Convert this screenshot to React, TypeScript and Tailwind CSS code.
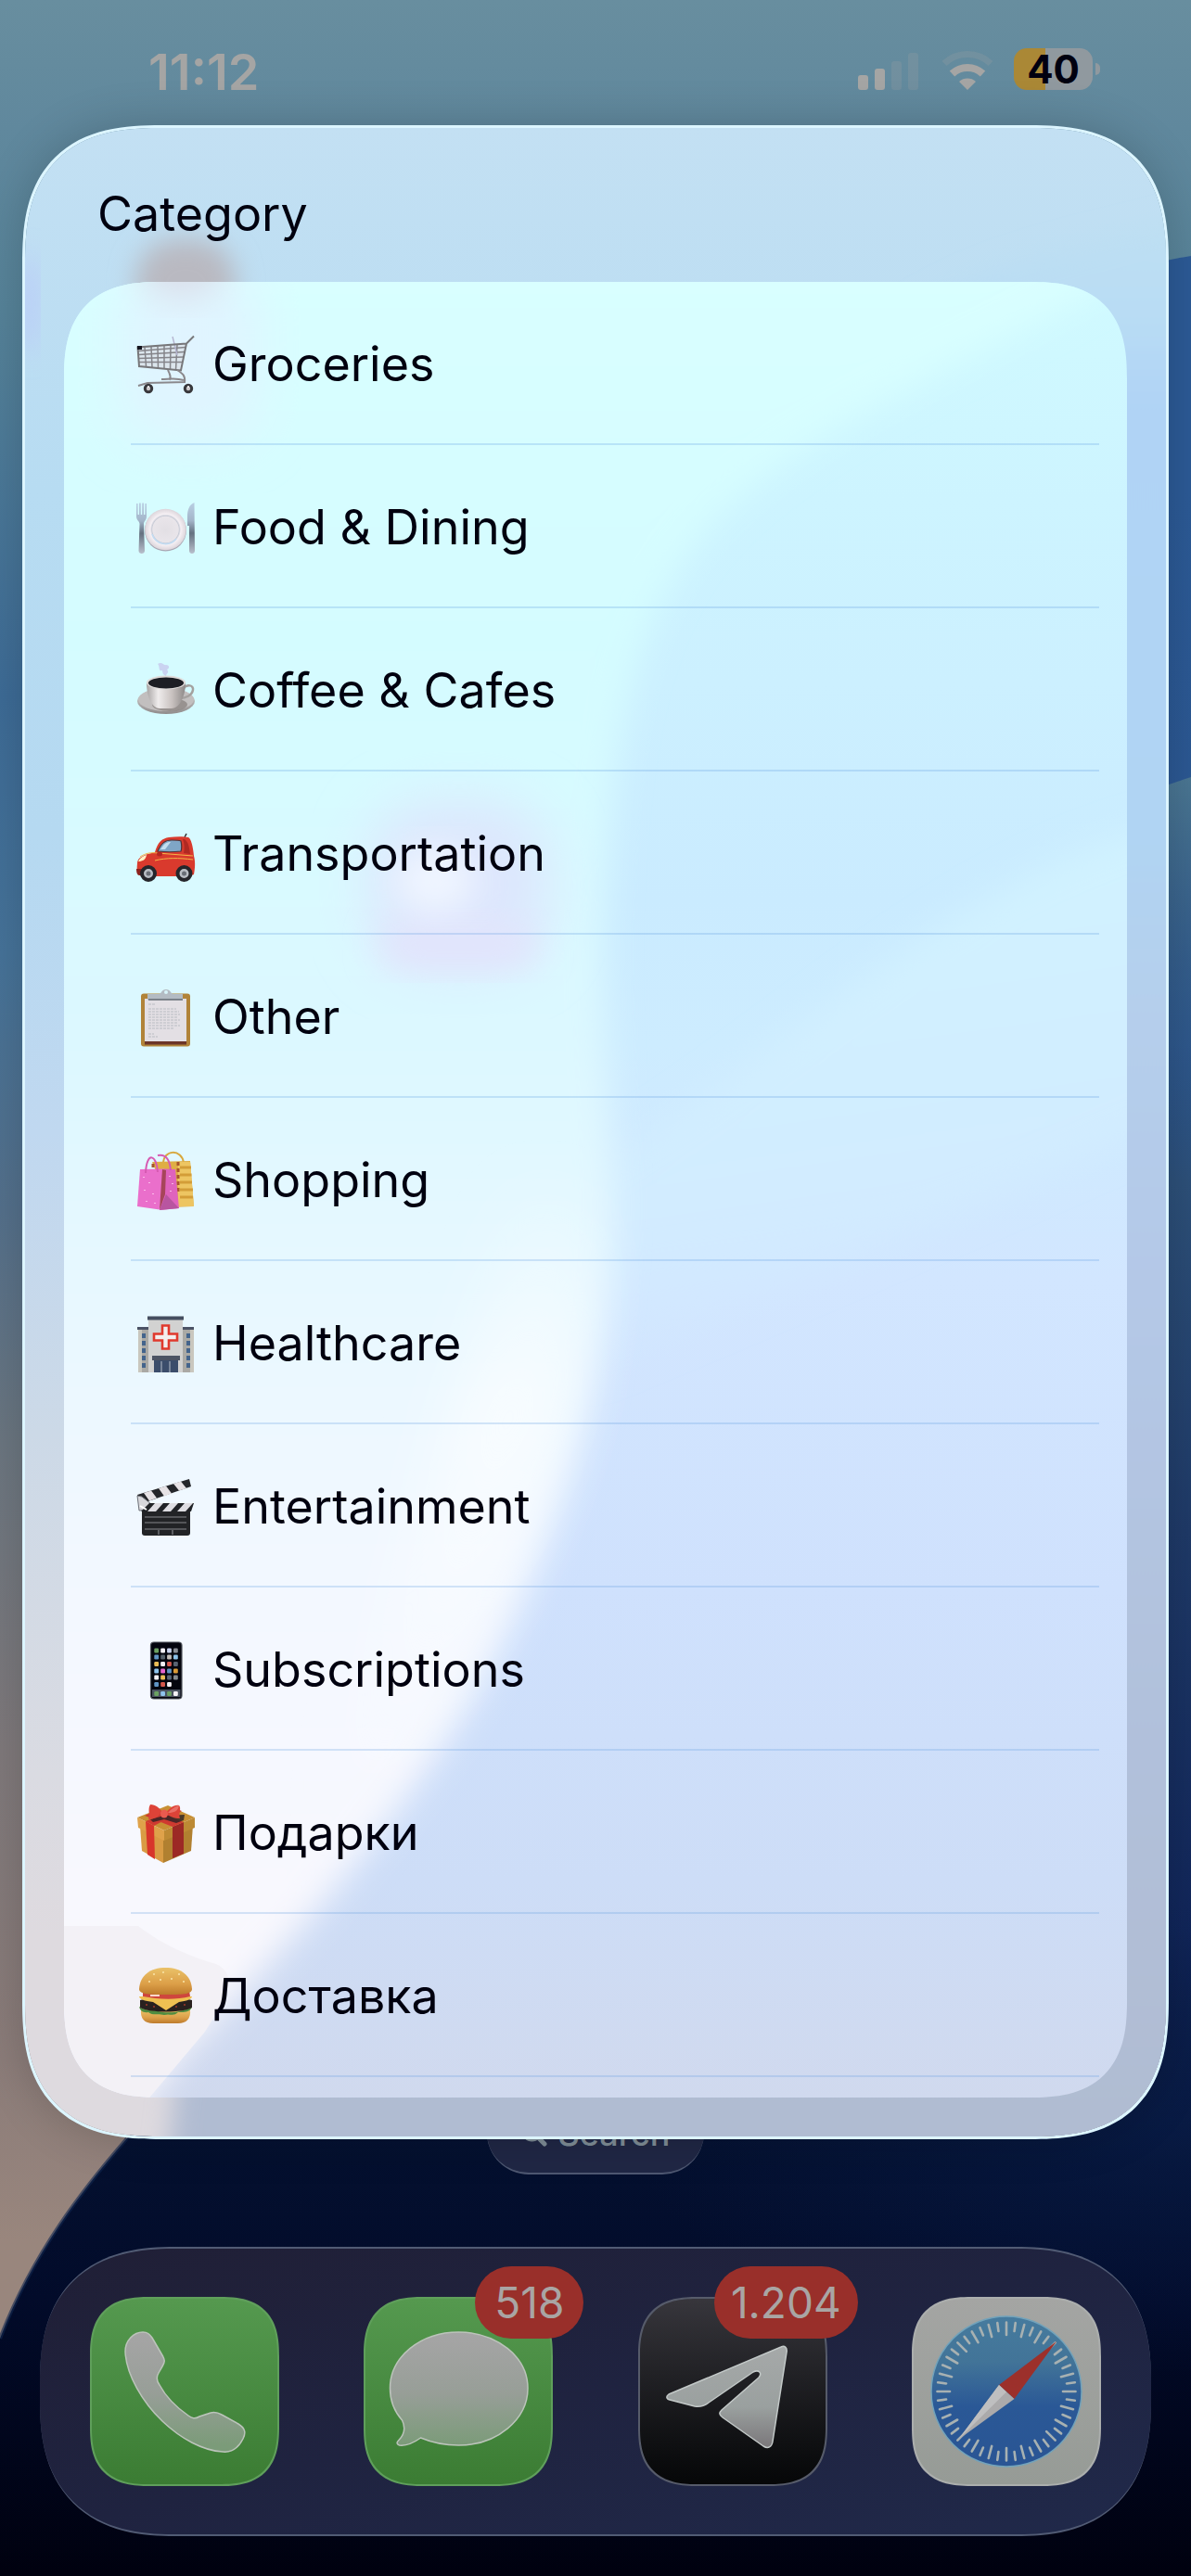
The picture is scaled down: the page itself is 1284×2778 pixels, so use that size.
import type { ReactNode } from "react";

const svg64 = "h-16 w-16 shrink-0 overflow-visible";

function Cart() {
  return (
    <svg viewBox="0 0 64 64" className={svg64} fill="none" aria-hidden="true">
      <path d="M54 9.500 48 38.500 3 34 1.500 13.500z" fill="#d8dbe0" opacity=".6" />
      <g stroke="#85858a" strokeWidth="1.500">
        <path d="M2 17.500 53 13.500M2.400 21.500 52 18.500M2.600 25.500 51 24M2.800 29.500 49.500 29.500" />
        <path d="M9 13.500 10.500 34M16 13 17 35M23 12.500 23.500 36M30 12 30 36.500M37 11.500 36.500 37M44 11 42.500 38" />
      </g>
      <path d="M39 2 44 22" stroke="#b4b4d0" strokeWidth="1.400" />
      <path d="M62 1.500 54 9.500 48 38.500 3 34 1.500 13.500 54 9.500" stroke="#77777a" strokeWidth="2" />
      <path d="M34 38c2 5 4 6 2 11M44 38c6 4 9 6 8 13M27 48c8 0 15-2 24 1M2 55l10-3 41-1" stroke="#8a888c" strokeWidth="2" />
      <rect x="1" y="12" width="5" height="4" fill="#15151f" />
      <g fill="#c9c6c8" stroke="#38383c" strokeWidth="3">
        <circle cx="13" cy="58" r="3.700" />
        <circle cx="56" cy="58" r="3.700" />
      </g>
      <path d="M12 56h2M55 56h2" stroke="#fff" strokeWidth="1.500" />
    </svg>
  );
}

function Plate() {
  return (
    <svg viewBox="0 0 64 64" className={svg64} aria-hidden="true">
      <defs>
        <linearGradient id="steel" x1="0" y1="0" x2="0" y2="1">
          <stop offset="0" stopColor="#b9cfe3" />
          <stop offset=".35" stopColor="#a3b5c9" />
          <stop offset=".6" stopColor="#647180" />
          <stop offset="1" stopColor="#b8bfcc" />
        </linearGradient>
        <radialGradient id="plate">
          <stop offset="0" stopColor="#e2dfe4" />
          <stop offset=".62" stopColor="#e9e5ea" />
          <stop offset=".66" stopColor="#c8cbd6" />
          <stop offset=".74" stopColor="#f5f0f4" />
          <stop offset="1" stopColor="#dcd5db" />
        </radialGradient>
      </defs>
      <circle cx="31.500" cy="35" r="22.500" fill="#a9a7b4" />
      <circle cx="31.500" cy="34" r="22.300" fill="url(#plate)" />
      <path d="M17 39a15 15 0 0 0 26 5" fill="none" stroke="#c2dcf2" strokeWidth="1.600" />
      <path d="M0 6h1.600v12h1.400V5.500h1.800V18h1.400V5.500h1.800V18h1.400V6H11v14c0 4-3 5-3 8l1 29c0 4-6.500 4-6.500 0l1-29c0-3-3.500-4-3.500-8z" fill="url(#steel)" />
      <path d="M62.500 5C57 7 55 13 55 20v10h2v27c0 4 6 4 6 0z" fill="url(#steel)" />
    </svg>
  );
}

function Coffee() {
  return (
    <svg viewBox="0 0 64 64" className={svg64} aria-hidden="true">
      <defs>
        <linearGradient id="cup" x1="0" x2="1">
          <stop offset="0" stopColor="#a8a4a4" />
          <stop offset=".3" stopColor="#efecec" />
          <stop offset=".65" stopColor="#c9c2c0" />
          <stop offset="1" stopColor="#8d8988" />
        </linearGradient>
        <linearGradient id="saucer" x1="0" y1="0" x2="0" y2="1">
          <stop offset="0" stopColor="#dad8d9" />
          <stop offset="1" stopColor="#908c8c" />
        </linearGradient>
      </defs>
      <ellipse cx="32" cy="43" rx="31" ry="14" fill="url(#saucer)" />
      <ellipse cx="32" cy="41.500" rx="30" ry="12.500" fill="#c2bfbf" />
      <ellipse cx="36" cy="47" rx="19" ry="7" fill="#7c7472" opacity=".6" />
      <path d="M50 30c5-6 12-4 11 1-1 6-8 9-14 9" fill="none" stroke="#a4a19f" strokeWidth="2.500" />
      <path d="M11 23c0 14 5 28 14 28h13c9 0 15-14 15-28z" fill="url(#cup)" />
      <ellipse cx="32" cy="23" rx="21" ry="7.500" fill="#dedbda" />
      <ellipse cx="32" cy="23.500" rx="19" ry="6" fill="#1d1e24" />
      <path d="M23 3c5-3 6 2 9 1 4 0 4 4 1 5 3 4-1 4-1 7-3-1-4-3-4-6-5 1-2-4-5-7z" fill="#c5c6ec" opacity=".75" />
    </svg>
  );
}

function Car() {
  return (
    <svg viewBox="0 0 64 64" className={svg64} aria-hidden="true">
      <path d="m52 14 2-4" stroke="#333" strokeWidth="1.500" />
      <path d="M20 30c3-11 8-15 15-16 8-1 16-1 21 0 3 1 5 10 6 20 2 7 1 15 0 20l-5 2H8c-7 0-8-5-7-14 0-6 6-9 19-12z" fill="#d93a2d" />
      <path d="M23 29c4-9 8-12 15-12 5 0 8 0 10 1 1 4 1 8 0 11-8 1-16 1-25 0z" fill="#7fa6c6" stroke="#4d3438" strokeWidth="1.200" />
      <path d="M26 27c4-6 6-8 11-8l-6 8z" fill="#c4dfef" />
      <path d="M52 16c4 3 5 8 6 16l-7-1c1-5 1-10-1-15z" fill="#8d1c19" opacity=".55" />
      <path d="M4 35c6-4 12-5 19-4l38 3M20 39c12-3 26-3 41-1" fill="none" stroke="#f2b648" strokeWidth="1" />
      <path d="M2 40c2-4 5-6 9-7-1 5-4 7-9 7z" fill="#fff1c4" />
      <ellipse cx="25" cy="32" rx="3" ry="2.500" fill="#b32620" />
      <path d="M0 48h8v7H3c-2 0-3-3-3-7z" fill="#8c211d" />
      <g fill="#b9bec4" stroke="#25262b" strokeWidth="4">
        <circle cx="13" cy="53" r="7" />
        <circle cx="51.500" cy="53" r="7" />
      </g>
      <g fill="#6a6f77">
        <circle cx="13" cy="53" r="2.500" />
        <circle cx="51.500" cy="53" r="2.500" />
      </g>
    </svg>
  );
}

function Clipboard() {
  return (
    <svg viewBox="0 0 64 64" className={svg64} aria-hidden="true">
      <rect x="5" y="6.500" width="53" height="57" rx="3" fill="#b18339" />
      <rect x="9" y="56" width="45" height="5.500" fill="#6c3528" />
      <path d="M9 12h45v46H9z" fill="#e3dfe4" />
      <path
        d="M13 18h7M13 23h30M13 26h33M13 29h34M13 32h32M13 35h34M13 38h31M13 41h34M13 44h27M13 50h6M13 53h10"
        stroke="#b9bcc2"
        strokeWidth="1"
        strokeDasharray="3 1"
      />
      <path d="M12 7h12c3 0 3-5 8-5s5 5 8 5h10v6H12z" fill="#b3bbc3" />
      <path d="M13 13h37" stroke="#626a72" strokeWidth="1.400" />
      <circle cx="32" cy="5" r="2" fill="#d8f4fa" />
    </svg>
  );
}

function Bags() {
  return (
    <svg viewBox="0 0 64 64" className={svg64} aria-hidden="true">
      <path d="M29 14c0-16 20-16 22-1" fill="none" stroke="#d8a83e" strokeWidth="2" />
      <path d="m17 12 41-1 4 49-25 1z" fill="#dfae45" />
      <path d="M45 12h13l4 48H45z" fill="#edc562" />
      <path d="M47 18h12M47 26h12.500M47 34h13M47 42h14M47 50h14" stroke="#d39d38" strokeWidth="3" />
      <path d="M45 12v34M18 14v5" stroke="#a8542c" strokeWidth="3" strokeDasharray="4 3" />
      <path d="m4 20 26-.500-5 44L1 60z" fill="#ea6fcb" />
      <path d="m30 19.500 12 .500 4 42-21 2z" fill="#df63bd" />
      <path d="m28 20 4 1-1 26-6 17z" fill="#a6455a" />
      <path d="m25 64 7-17 14 15z" fill="#b855a0" />
      <path d="M10 24C11 0 22 4 23 23M23 5c9-2 13 5 14 16" fill="none" stroke="#d65ab2" strokeWidth="2" />
      <path d="M8 28v1M14 34v1M9 42v1M18 46v1M11 54v1M20 56v1M36 27v1M39 35v1M37 43v1" stroke="#ffd5f4" strokeWidth="1.500" />
    </svg>
  );
}

function Hospital() {
  return (
    <svg viewBox="0 0 64 64" className={svg64} aria-hidden="true">
      <path d="M2 16h60v47H2z" fill="#aaa9a5" />
      <path d="M2 16h4v47H2zM58 16h4v47h-4z" fill="#c9c7be" />
      <path d="M1 14h13v3H1zM50 14h12v3H50z" fill="#4b5365" />
      <path d="M13 5h37v58H13z" fill="#d2d2d1" />
      <path d="M12 2.500h39v4H12z" fill="#454e60" />
      <g fill="#44648c">
        {[21, 29, 37, 45, 53].map((y) => (
          <path key={y} d={`M6 ${y}h4v5H6zM54 ${y}h4v5h-4z`} />
        ))}
      </g>
      <path d="M28 12.500h7v9h9v7h-9v9h-7v-9h-9v-7h9z" fill="#f3eeee" stroke="#e0392d" strokeWidth="2.600" />
      <path d="M17 45h30v5H17z" fill="#4d5463" />
      <path d="M19 50h26v13H19z" fill="#3b4d6b" />
      <path d="M27 51v12M36 51v12" stroke="#8e99ab" strokeWidth="1.500" />
    </svg>
  );
}

function Clapper() {
  return (
    <svg viewBox="0 0 64 64" className={svg64} aria-hidden="true">
      <path d="M1 19 57 2l2 8L4 29z" fill="#24262a" />
      <path d="m8 17 8-2.500 6 8-8 3zM24 12l8-2.500 6 8-8 3zM40 7l8-2.500 6 7.500-8 2.500z" fill="#e6e2e5" />
      <path d="m1 20 5 1 10 8-4 6-9 1z" fill="#d7d7db" stroke="#6d7077" strokeWidth="1" />
      <path d="M6 36h52v24c0 2-1 3-3 3H9c-2 0-3-1-3-3z" fill="#222326" />
      <path d="M14 28h48l-3 9H5z" fill="#202226" />
      <path d="m20 28 9 .1-8 8.900h-9zM36 28h9l-8 9h-9zM52 28h9l-8 9h-9z" fill="#dedde2" />
      <path d="M9 43h45M9 49h45M9 56h45M24 57v5M39 57v5" stroke="#85878b" strokeWidth="1.200" />
      <path d="m4 31 7 4" stroke="#fff" strokeWidth="2" />
    </svg>
  );
}

const phoneRows = [
  [11, "#6ba162", "#f4f1f6", "#c9d2ee", "#8b8f96"],
  [18, "#5f94c4", "#55606b", "#c3bdb8", "#8dc2ea"],
  [25.5, "#e9bc56", "#f4f1f6", "#d5574c", "#596371"],
  [33, "#8fc3ec", "#e765cc", "#5f94c4", "#d99a36"],
  [40, "#f4f1f6", "#e9bc56", "#5a6676", "#858a8e"],
  [47.5, "#5f94c4", "#d5574c", "#f4f1f6", "#05060f"],
  [57.5, "#6ba162", "#8fc3ec", "#6ba162", "#f4f1f6"],
] as const;

function Phone() {
  return (
    <svg viewBox="0 0 64 64" className={svg64} aria-hidden="true">
      <rect x="15.500" y="2" width="33.500" height="61" rx="3.500" fill="#04050e" stroke="#4c5057" strokeWidth="1.200" />
      <path d="M17 53h30.500v8H17z" fill="#4a5360" />
      {phoneRows.map(([y, ...colors]) =>
        colors.map((c, i) => (
          <rect key={`${y}-${i}`} x={19.3 + i * 6.9} y={y - 2.4} width="4.800" height="4.800" rx="1.200" fill={c} />
        )),
      )}
    </svg>
  );
}

function Gift() {
  return (
    <svg viewBox="0 0 64 64" className={svg64} aria-hidden="true">
      <path d="M4 24 29 36v28L6 51z" fill="#d99b44" />
      <path d="m29 36 32-13-2 28-30 13z" fill="#b18030" />
      <path d="m1 15 33-13 29 13-33 14z" fill="#c89034" />
      <path d="m1 15 29 14v11L2 26z" fill="#dfa24a" />
      <path d="m30 29 33-14v11L30 40z" fill="#bd8a34" />
      <path d="m10 19 9 5 1 36-8-5z" fill="#d8352b" />
      <path d="m39 25 12-5v34l-12 5z" fill="#9c2925" />
      <path d="m10 19 34-13 5 2-30 16zM20 8l31 12-12 5-30-12z" fill="#cf3a30" />
      <path d="m15 17 15-4 22-1-1 6-8 3-13-4-12 3z" fill="#2b2226" opacity=".8" />
      <path d="M15 1c6 0 10 4 13 8-4 5-9 8-15 8 2-6-1-11 2-16zM46 2c-6-1-11 4-14 8 3 4 9 6 15 6-2-5 2-11-1-14z" fill="#dd4338" />
      <path d="M34 10c3-4 8-7 12-8-1 6-5 8-12 8z" fill="#ea6f66" />
      <ellipse cx="30" cy="11" rx="4" ry="4.500" fill="#ea5a4f" />
    </svg>
  );
}

function Burger() {
  return (
    <svg viewBox="0 0 64 64" className={svg64} aria-hidden="true">
      <defs>
        <linearGradient id="bun" x1="0" y1="0" x2="0" y2="1">
          <stop offset="0" stopColor="#eac269" />
          <stop offset=".6" stopColor="#dc9f48" />
          <stop offset="1" stopColor="#bd7b2c" />
        </linearGradient>
      </defs>
      <path d="M5 46h53c1 10-4 15-13 15H18C9 61 4 56 5 46z" fill="url(#bun)" />
      <path d="M3 43c9 6 17 3 25 6 12 1 20 0 32-6-2 7-10 6-15 6-5 5-9 1-15 3-7-2-12 1-17-3-6 1-9-2-10-6z" fill="#4f8c40" />
      <path d="M4 36c18-5 37-5 56 0v8c-10 6-46 6-56 0z" fill="#29211f" />
      <path d="M10 41h2M18 43h2M42 43h2M51 41h2" stroke="#a03a2c" strokeWidth="1.500" />
      <path d="M3 32h57c0 3-6 5-14 6L32 47 18 38C9 37 3 35 3 32z" fill="#efc052" />
      <path d="M7 26h50l1 6c-16 4-35 3-51 0z" fill="#cf463d" />
      <path d="M15 31h10" stroke="#ffd7cb" strokeWidth="2" />
      <path d="M3 24C4 9 15 1 31.500 1S59 9 60 24c0 6-12 6-28 6S3 30 3 24z" fill="url(#bun)" />
      <path d="M19 7v2M29 5v2M38 12v2M46 7v2M26 13v2M51 15v2M14 15v2" stroke="#f8e3a6" strokeWidth="1.600" />
    </svg>
  );
}

const categories: { name: string; icon: ReactNode }[] = [
  { name: "Groceries", icon: <Cart /> },
  { name: "Food & Dining", icon: <Plate /> },
  { name: "Coffee & Cafes", icon: <Coffee /> },
  { name: "Transportation", icon: <Car /> },
  { name: "Other", icon: <Clipboard /> },
  { name: "Shopping", icon: <Bags /> },
  { name: "Healthcare", icon: <Hospital /> },
  { name: "Entertainment", icon: <Clapper /> },
  { name: "Subscriptions", icon: <Phone /> },
  { name: "Подарки", icon: <Gift /> },
  { name: "Доставка", icon: <Burger /> },
];

function Wallpaper() {
  return (
    <svg viewBox="0 0 1284 2778" preserveAspectRatio="none" className="absolute inset-0 h-full w-full" aria-hidden="true">
      <defs>
        <linearGradient id="wLeft" x1="0" y1="0" x2="0" y2="1">
          <stop offset="0" stopColor="#688e9f" />
          <stop offset=".05" stopColor="#60889d" />
          <stop offset=".12" stopColor="#568399" />
          <stop offset=".27" stopColor="#3d6b96" />
          <stop offset=".37" stopColor="#467399" />
          <stop offset=".47" stopColor="#54708b" />
          <stop offset=".56" stopColor="#6b7680" />
          <stop offset=".68" stopColor="#7f797b" />
          <stop offset=".8" stopColor="#8b7c79" />
          <stop offset=".87" stopColor="#99867d" />
        </linearGradient>
        <linearGradient id="wRight" x1="0" y1="0" x2="0" y2="1">
          <stop offset="0" stopColor="#2c5a96" />
          <stop offset=".1" stopColor="#2c5a96" />
          <stop offset=".34" stopColor="#2b5690" />
          <stop offset=".4" stopColor="#2d5079" />
          <stop offset=".55" stopColor="#1f3a68" />
          <stop offset=".72" stopColor="#11265a" />
          <stop offset=".82" stopColor="#04102f" />
          <stop offset=".88" stopColor="#020b2a" />
          <stop offset="1" stopColor="#00010f" />
        </linearGradient>
        <linearGradient id="wBand" x1="0" y1="0" x2="0" y2="1">
          <stop offset="0" stopColor="#4b7793" />
          <stop offset="1" stopColor="#2d5079" stopOpacity="0" />
        </linearGradient>
        <radialGradient id="wGlow">
          <stop offset="0" stopColor="#0b2355" />
          <stop offset="1" stopColor="#0b2355" stopOpacity="0" />
        </radialGradient>
      </defs>
      <rect width="1284" height="2778" fill="url(#wLeft)" />
      <path d="M1284 276C1000 320 800 600 660 1250 600 1700 300 2120 137 2306 90 2360 35 2430 0 2522V2778H1284Z" fill="url(#wRight)" />
      <path d="M1284 838C1200 866 1100 900 1000 960V1250H1284Z" fill="url(#wBand)" />
      <ellipse cx="1284" cy="2300" rx="600" ry="260" fill="url(#wGlow)" opacity=".45" />
      <path d="M137 2306C90 2360 35 2430 0 2522" fill="none" stroke="#10264f" strokeWidth="4" opacity=".6" />
    </svg>
  );
}

function SheetBackdrop() {
  return (
    <svg viewBox="0 0 1235 2172" preserveAspectRatio="none" className="absolute inset-0 h-full w-full" aria-hidden="true">
      <defs>
        <linearGradient id="sLeft" x1="0" y1="0" x2="0" y2="1">
          <stop offset="0" stopColor="#c3e0f3" />
          <stop offset=".18" stopColor="#b7dcf2" />
          <stop offset=".35" stopColor="#b5d9f1" />
          <stop offset=".5" stopColor="#c0d8f0" />
          <stop offset=".65" stopColor="#ccd9e7" />
          <stop offset=".82" stopColor="#dadbe2" />
          <stop offset=".9" stopColor="#dedadf" />
        </linearGradient>
        <linearGradient id="sRight" x1="0" y1="0" x2="0" y2="1">
          <stop offset="0" stopColor="#bfe0f2" />
          <stop offset=".06" stopColor="#b8dcf4" />
          <stop offset=".1" stopColor="#b0d3f5" />
          <stop offset=".32" stopColor="#b0d4f3" />
          <stop offset=".4" stopColor="#b5cfec" />
          <stop offset=".52" stopColor="#b4c9e8" />
          <stop offset=".75" stopColor="#b1c1dc" />
          <stop offset="1" stopColor="#b0bbd0" />
        </linearGradient>
        <filter id="sBlur" x="-30%" y="-30%" width="160%" height="160%">
          <feGaussianBlur stdDeviation="14" />
        </filter>
      </defs>
      <rect width="1235" height="2172" fill="url(#sLeft)" />
      <path d="M1300 80C1150 150 900 100 720 500L600 1900 170 2060 150 2240H1300Z" fill="url(#sRight)" filter="url(#sBlur)" />
      <rect x="120" y="120" width="108" height="110" rx="45" fill="#b9b9c1" filter="url(#sBlur)" />
      <ellipse cx="4" cy="190" rx="8" ry="55" fill="#b9c5fa" filter="url(#sBlur)" />
    </svg>
  );
}

function PanelBackdrop() {
  return (
    <svg viewBox="0 0 1146 1957" preserveAspectRatio="none" className="absolute inset-0 h-full w-full" aria-hidden="true">
      <defs>
        <linearGradient id="pLeft" x1="0" y1="0" x2="0" y2="1">
          <stop offset="0" stopColor="#daffff" />
          <stop offset=".22" stopColor="#d4fcff" />
          <stop offset=".42" stopColor="#dcf8ff" />
          <stop offset=".56" stopColor="#e8f8ff" />
          <stop offset=".68" stopColor="#f2f8ff" />
          <stop offset=".85" stopColor="#f8f8fe" />
          <stop offset="1" stopColor="#fbf8fb" />
        </linearGradient>
        <linearGradient id="pRight" x1="0" y1="0" x2="0" y2="1">
          <stop offset="0" stopColor="#d0faff" />
          <stop offset=".12" stopColor="#cdf4ff" />
          <stop offset=".22" stopColor="#ccf0ff" />
          <stop offset=".34" stopColor="#caebff" />
          <stop offset=".42" stopColor="#cdecff" />
          <stop offset=".55" stopColor="#d2e6ff" />
          <stop offset=".72" stopColor="#cfe1fd" />
          <stop offset=".88" stopColor="#cdddf7" />
          <stop offset="1" stopColor="#d0d9ee" />
        </linearGradient>
        <linearGradient id="pEdge" x1="0" y1="0" x2="0" y2="1">
          <stop offset="0" stopColor="#fff" stopOpacity="0" />
          <stop offset=".35" stopColor="#fff" stopOpacity=".6" />
          <stop offset="1" stopColor="#fff" stopOpacity="0" />
        </linearGradient>
        <linearGradient id="pBand" x1=".4" y1="0" x2=".55" y2="1">
          <stop offset="0" stopColor="#d0f4ff" />
          <stop offset=".7" stopColor="#d2ebff" />
          <stop offset="1" stopColor="#d2e6ff" stopOpacity="0" />
        </linearGradient>
        <filter id="pBlur" x="-30%" y="-30%" width="160%" height="160%">
          <feGaussianBlur stdDeviation="18" />
        </filter>
        <filter id="pSoft" x="-30%" y="-30%" width="160%" height="160%">
          <feGaussianBlur stdDeviation="30" />
        </filter>
      </defs>
      <rect width="1146" height="1957" fill="url(#pRight)" />
      <path d="M560 960C800 820 950 640 1200 580V900L560 1180Z" fill="url(#pBand)" filter="url(#pBlur)" />
      <path
        d="M-80-80H1250C1100 40 850 120 720 240 610 340 590 500 582 700 580 850 600 960 588 1080 570 1240 520 1370 465 1480 400 1610 270 1770 121 1916L40 2040H-80Z"
        fill="url(#pLeft)"
        filter="url(#pBlur)"
      />
      <path d="M490 960C540 980 570 960 572 1060 550 1320 400 1560 280 1690 360 1400 430 1200 490 960Z" fill="url(#pEdge)" filter="url(#pSoft)" />
      <path d="M-40 1772H80C110 1795 140 1806 164 1813 182 1822 180 1835 168 1860L152 1886 88 1962H-40Z" fill="#f3f1f6" />
      <rect x="328" y="560" width="196" height="180" rx="70" fill="#dde6fd" filter="url(#pSoft)" />
      <rect x="340" y="690" width="170" height="50" rx="25" fill="#e2e4fc" filter="url(#pBlur)" />
      <ellipse cx="400" cy="645" rx="44" ry="36" fill="#eff5ff" filter="url(#pBlur)" />
      <rect x="60" y="-20" width="150" height="190" rx="50" fill="#e0f4ff" filter="url(#pSoft)" />
      <rect x="84" y="-60" width="86" height="76" rx="30" fill="#dbdfeb" filter="url(#pBlur)" />
    </svg>
  );
}

function StatusBar() {
  return (
    <header className="relative flex h-[135px] shrink-0 items-start justify-between pt-12 pr-[98px] pl-40 text-[#a5a5a4]">
      <time className="text-[54px] leading-[60px] font-semibold">11:12</time>
      <div className="flex items-center pt-1">
        <svg viewBox="0 0 66 44" className="h-11 w-[66px]" fill="currentColor" role="img" aria-label="Signal">
          <rect x="0" y="28" width="11" height="16" rx="3" />
          <rect x="18" y="21" width="11" height="23" rx="3" />
          <rect x="36" y="13" width="11" height="31" rx="3" opacity=".22" />
          <rect x="54" y="4" width="11" height="40" rx="3" opacity=".22" />
        </svg>
        <svg viewBox="0 0 56 44" className="ml-6 h-11 w-14" fill="none" stroke="currentColor" role="img" aria-label="Wi-Fi">
          <path d="M3 15.500a36 36 0 0 1 50 0" strokeWidth="7" opacity=".22" />
          <path d="M11.500 26.500a24 24 0 0 1 33 0" strokeWidth="8" />
          <path d="M19 35a13.500 13.500 0 0 1 18 0l-9 9z" fill="currentColor" stroke="none" />
        </svg>
        <div className="ml-[22px] flex items-center gap-[3px]">
          <div className="flex h-[45px] w-[85px] items-center justify-center rounded-[14px] bg-linear-to-r from-[#aa8836] from-40% to-[#90999f] to-40% text-[42px] leading-none font-bold text-[#00000f]">
            40
          </div>
          <div className="h-[13px] w-[5px] rounded-r-full bg-[#90999f]" />
        </div>
      </div>
    </header>
  );
}

function CategorySheet() {
  return (
    <section
      role="dialog"
      aria-labelledby="sheet-title"
      className="relative z-10 mx-6 overflow-hidden rounded-[122px] border-[3px] border-[#dcf5ff] pb-[42px] shadow-[0_0_50px_rgba(0,0,0,0.18)] supports-[corner-shape:squircle]:rounded-[150px] supports-[corner-shape:squircle]:[corner-shape:superellipse(1.38)]"
    >
      <SheetBackdrop />
      <h1 id="sheet-title" className="relative flex h-[166px] items-center pt-5 pl-[78px] text-[52px] leading-[60px] text-[#00000f]">
        Category
      </h1>
      <div className="relative mx-[42px] overflow-hidden rounded-[82px] pb-[22px] supports-[corner-shape:squircle]:rounded-[105px] supports-[corner-shape:squircle]:[corner-shape:superellipse(1.38)]">
        <PanelBackdrop />
        <ul className="relative mr-[30px] ml-[72px]">
          {categories.map((c) => (
            <li key={c.name} className="border-b-2 border-[#5f9ce0]/25">
              <button type="button" className="flex h-[174px] w-full items-center gap-[18px] pt-1 pl-[6px] text-left text-[52px] leading-[60px] text-[#00000f]">
                {c.icon}
                {c.name}
              </button>
            </li>
          ))}
        </ul>
      </div>
    </section>
  );
}

function PhoneGlyph() {
  return (
    <path
      d="M38 59C38 47 47 38 57 38c5 0 7 2 10 6l11 19c3 5 3 7 0 12l-4 7c-3 5-2 9 1 13 7 13 18 24 31 33 4 3 7 4 12 1l9-3c6-3 10-2 15 1l18 10c8 5 8 10 5 16-5 10-13 15-22 14-21-1-45-14-65-33C57 114 39 84 38 59Z"
      fill="url(#glyphGreen)"
      stroke="#bcc4bb"
      strokeWidth="1.500"
    />
  );
}

function MessageGlyph() {
  return (
    <path
      d="M102.500 38C144 38 177 65 177 98.500S144 160 102.500 160c-15 0-29-3-41-8-7 5-15 9-23 8-3-1-3-3-1-5 6-6 8-14 4-22-8-9-13-21-13-34.500C28.500 65 61 38 102.500 38Z"
      fill="url(#glyphGreen)"
      stroke="#bcc4bb"
      strokeWidth="1.500"
    />
  );
}

function PlaneGlyph() {
  return (
    <path
      d="M33 105 154 54c4-2 7 1 6 6l-15 96c-1 6-5 8-10 5L91 130c-4-3-4-5-1-8l40-35c4-5 0-9-6-6l-48 33c-5 4-9 5-15 4l-27-7c-4-1-4-4-1-6Z"
      fill="url(#glyphPlane)"
      stroke="#c3c9c8"
      strokeWidth="1.500"
      strokeLinejoin="round"
    />
  );
}

function CompassGlyph() {
  return (
    <>
      <circle cx="102" cy="102" r="81" fill="url(#compass)" stroke="#72a3bb" strokeWidth="1.500" />
      {Array.from({ length: 48 }, (_, i) => (
        <path
          key={i}
          d={i % 2 === 0 ? "M102 27.500V41" : "M102 27.500V36.500"}
          stroke="#a7b1b2"
          strokeWidth="2.600"
          strokeLinecap="round"
          transform={`rotate(${i * 7.5} 102 102)`}
        />
      ))}
      <path d="M156 48 110.500 110 94 95Z" fill="#9c302b" />
      <path d="M50 154 94 95l16.500 15Z" fill="#abaaab" />
      <path d="M50 154 94 95l8 7.500Z" fill="#bfbfc0" />
    </>
  );
}

const apps: { name: string; badge?: string; tile: string; glyph: ReactNode }[] = [
  { name: "Phone", tile: "from-[#55994f] to-[#3b7c33] border-[#5f9f5b]", glyph: <PhoneGlyph /> },
  { name: "Messages", badge: "518", tile: "from-[#55994f] to-[#3b7c33] border-[#5f9f5b]", glyph: <MessageGlyph /> },
  { name: "Telegram", badge: "1.204", tile: "from-[#37363c] to-[#060708] border-[#565b6a]", glyph: <PlaneGlyph /> },
  { name: "Safari", tile: "from-[#a4a5a3] to-[#969b96] border-[#abaead]", glyph: <CompassGlyph /> },
];

function GlyphDefs() {
  return (
    <svg className="absolute h-0 w-0" aria-hidden="true">
      <defs>
        <linearGradient id="glyphGreen" gradientUnits="userSpaceOnUse" x1="0" y1="38" x2="0" y2="160">
          <stop offset="0" stopColor="#a6a5a6" />
          <stop offset=".55" stopColor="#979e97" />
          <stop offset="1" stopColor="#7b9b79" />
        </linearGradient>
        <linearGradient id="glyphPlane" x1="0" y1="0" x2="0" y2="1">
          <stop offset="0" stopColor="#a6a9a9" />
          <stop offset=".6" stopColor="#9aa09f" />
          <stop offset="1" stopColor="#7a777a" />
        </linearGradient>
        <linearGradient id="compass" x1="0" y1="0" x2="0" y2="1">
          <stop offset="0" stopColor="#467b9e" />
          <stop offset=".3" stopColor="#427498" />
          <stop offset=".6" stopColor="#2a5896" />
          <stop offset="1" stopColor="#2a5594" />
        </linearGradient>
      </defs>
    </svg>
  );
}

export default function App() {
  return (
    <main className="relative flex min-h-screen flex-col overflow-hidden bg-[#020b2a] font-['Inter','Noto_Sans',sans-serif]">
      <Wallpaper />
      <GlyphDefs />
      <StatusBar />
      <CategorySheet />
      <button
        type="button"
        className="relative -mt-[52px] flex h-[90px] w-[234px] items-center justify-center gap-3 self-center rounded-full border-b-2 border-[#4e5872] bg-[#202745] pt-1 text-[36px] leading-none font-medium text-[#7f8d96]"
      >
        <svg viewBox="0 0 28 28" className="h-7 w-7" fill="none" stroke="currentColor" strokeWidth="5" strokeLinecap="round" aria-hidden="true">
          <circle cx="11.500" cy="11.500" r="8.500" />
          <path d="m18 18 7 7" />
        </svg>
        Search
      </button>
      <nav
        aria-label="Dock"
        className="relative mx-[43px] mt-[78px] mb-[43px] flex h-[312px] items-center justify-between rounded-[120px] border-y-2 border-[#515b74] bg-linear-to-br from-[#201f36] via-[#1f2340] to-[#20294a] px-[54px] supports-[corner-shape:squircle]:rounded-[146px] supports-[corner-shape:squircle]:[corner-shape:superellipse(1.3)]"
      >
        {apps.map((app) => (
          <a key={app.name} href="#" aria-label={app.name} className="relative block h-[204px] w-[204px]">
            <span
              className={`block h-full w-full rounded-[52px] border-2 bg-linear-to-b supports-[corner-shape:squircle]:rounded-[64px] supports-[corner-shape:squircle]:[corner-shape:superellipse(1.38)] ${app.tile}`}
            />
            <svg viewBox="0 0 204 204" className="absolute inset-0 h-full w-full" aria-hidden="true">
              {app.glyph}
            </svg>
            {app.badge && (
              <span className="absolute -top-[33px] -right-[33px] flex h-[78px] min-w-[117px] items-center justify-center rounded-full bg-[#992f2a] px-[18px] text-[46px] leading-none text-[#a9a5a4]">
                {app.badge}
              </span>
            )}
          </a>
        ))}
      </nav>
    </main>
  );
}
